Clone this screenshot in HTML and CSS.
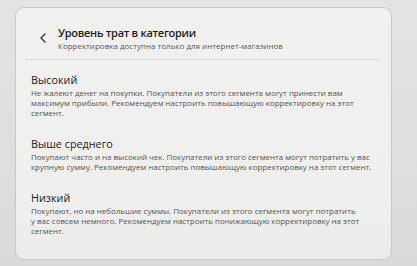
FILE: index.html
```html
<!DOCTYPE html>
<html lang="ru">
<head>
<meta charset="utf-8">
<link rel="stylesheet" href="styles.css">
</head>
<body>
<div class="card">
  <div class="header">
    <svg class="back" width="8" height="12" viewBox="0 0 8 12"><path d="M6 2 L2 6 L6 10" fill="none" stroke="#333" stroke-width="1.4" stroke-linecap="round" stroke-linejoin="round"/></svg>
    <div class="titles">
      <div class="title">Уровень трат в категории</div>
      <div class="subtitle">Корректировка доступна только для интернет-магазинов</div>
    </div>
  </div>
  <div class="divider"></div>
  <div class="section">
    <div class="name">Высокий</div>
    <div class="desc">Не жалеют денег на покупки. Покупатели из этого сегмента могут принести вам максимум прибыли. Рекомендуем настроить повышающую корректировку на этот сегмент.</div>
  </div>
  <div class="section">
    <div class="name">Выше среднего</div>
    <div class="desc">Покупают часто и на высокий чек. Покупатели из этого сегмента могут потратить у&nbsp;вас крупную сумму. Рекомендуем настроить повышающую корректировку на этот сегмент.</div>
  </div>
  <div class="section">
    <div class="name">Низкий</div>
    <div class="desc">Покупают, но на небольшие суммы. Покупатели из этого сегмента могут потратить у&nbsp;вас совсем немного. Рекомендуем настроить понижающую корректировку на этот сегмент.</div>
  </div>
</div>
</body>
</html>
```
FILE: styles.css
```css
html, body { margin: 0; height: 100%; }
body {
  background: linear-gradient(180deg, #e4e4e2 0%, #dadad8 100%);
  font-family: "Open Sans", "Liberation Sans", sans-serif;
  overflow: hidden;
}
.card {
  box-sizing: border-box;
  margin: 7px 0 0 15px;
  width: 377px;
  height: 253px;
  background: linear-gradient(180deg, #f1f1ef 0%, #efefed 80%, #ebebea 100%);
  border: 1px solid #c9c9c9;
  border-radius: 9px;
}
.header {
  display: flex;
  align-items: flex-start;
  padding: 18px 0 0 23px;
}
.back { margin-top: 5.5px; margin-right: 11px; flex: none; }
.title {
  font-size: 11px;
  font-weight: 600;
  letter-spacing: -0.3px;
  color: #1e1e1e;
  line-height: 14px;
}
.subtitle {
  font-size: 8px;
  color: #5a5a5a;
  line-height: 11px;
}
.divider {
  height: 1px;
  background: #dcdcda;
  margin: 8px 11px 0 9px;
}
.section { padding: 12px 0 0 15px; width: 342px; }
.section + .section { padding-top: 17.5px; }
.name {
  font-size: 10.8px;
  color: #222;
  line-height: 15px;
}
.desc {
  font-size: 7.95px;
  color: #555;
  line-height: 10.2px;
  margin-top: 1px;
}
```
